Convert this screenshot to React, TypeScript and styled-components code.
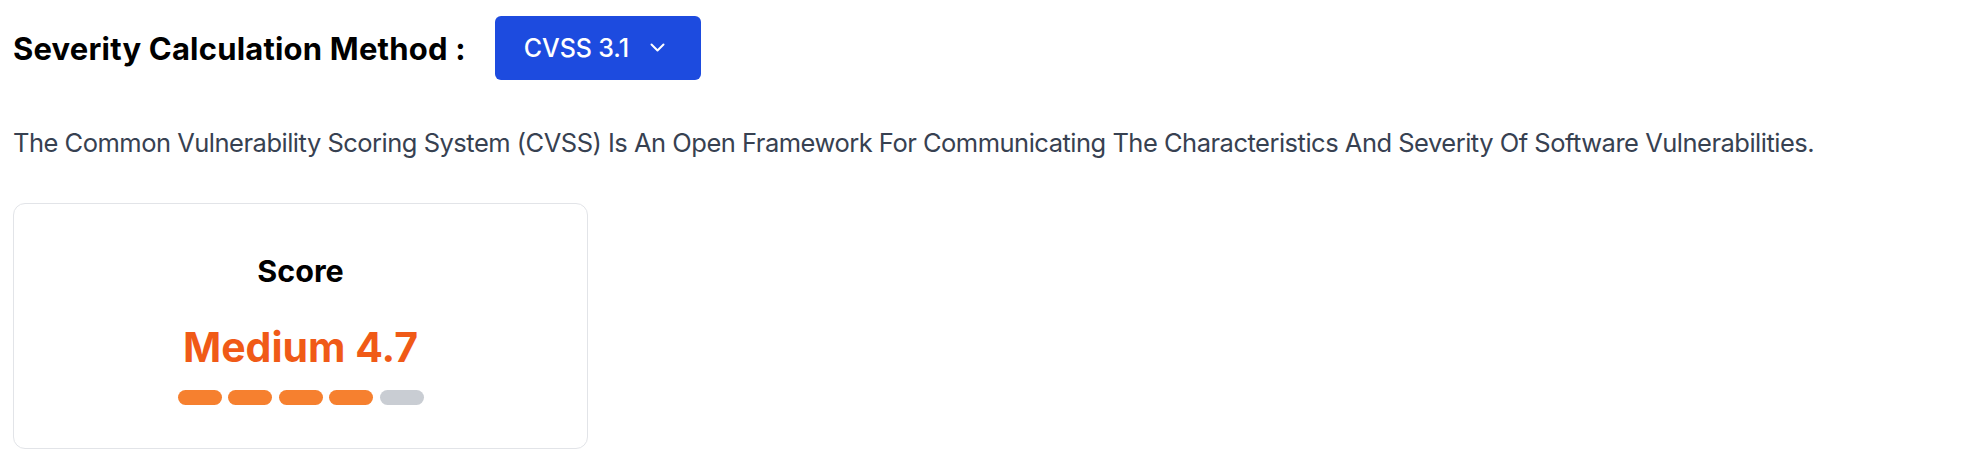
import React from "react";
import styled, { createGlobalStyle } from "styled-components";

const GlobalStyle = createGlobalStyle`
  html, body {
    margin: 0;
    padding: 0;
    background: #ffffff;
  }
  body {
    font-family: Inter, "Noto Sans", "Liberation Sans", sans-serif;
    -webkit-font-smoothing: antialiased;
  }
`;

const Page = styled.div`
  display: flex;
  flex-direction: column;
  align-items: flex-start;
  padding: 16px 13px;
`;

const Header = styled.div`
  display: flex;
  align-items: center;
  gap: 29px;
  height: 64px;
`;

const Title = styled.h2`
  margin: 0;
  padding-top: 2px;
  font-size: 31px;
  font-weight: 700;
  color: #000000;
  letter-spacing: 0.2px;
  line-height: 1.2;
  white-space: nowrap;
`;

const SelectButton = styled.button`
  display: flex;
  align-items: center;
  gap: 21px;
  height: 64px;
  box-sizing: border-box;
  padding: 0 36px 0 29px;
  border: none;
  border-radius: 6px;
  background: #1d4bdf;
  color: #ffffff;
  font-family: inherit;
  font-size: 25px;
  font-weight: 500;
  letter-spacing: -0.1px;
  white-space: nowrap;
  cursor: pointer;
`;

const Description = styled.p`
  margin: 43px 0 0;
  font-size: 25.5px;
  line-height: 39px;
  font-weight: 400;
  letter-spacing: -0.5px;
  color: #374151;
  white-space: nowrap;
`;

const Card = styled.div`
  margin-top: 41px;
  width: 575px;
  box-sizing: border-box;
  border: 1px solid #e2e4e8;
  border-radius: 12px;
  padding: 49px 0 43px;
  display: flex;
  flex-direction: column;
  align-items: center;
`;

const CardLabel = styled.div`
  font-size: 30.5px;
  font-weight: 700;
  line-height: 36px;
  color: #000000;
`;

const ScoreValue = styled.div<{ $color: string }>`
  margin-top: 34px;
  font-size: 41px;
  font-weight: 700;
  line-height: 49px;
  color: ${(p) => p.$color};
`;

const Bars = styled.div`
  margin-top: 18px;
  display: flex;
  gap: 6.5px;
`;

const Bar = styled.span<{ $active: boolean }>`
  display: block;
  width: 44px;
  height: 15px;
  border-radius: 999px;
  background: ${(p) => (p.$active ? "#f6802f" : "#c9cdd3")};
`;

const Chevron = () => (
  <svg width="15" height="10" viewBox="0 0 15 10" fill="none">
    <path
      d="M1.5 1.5L7.5 7.5L13.5 1.5"
      stroke="#ffffff"
      strokeWidth="2"
      strokeLinecap="round"
      strokeLinejoin="round"
    />
  </svg>
);

export default function App() {
  const level = 4;
  return (
    <>
      <GlobalStyle />
      <Page>
        <Header>
          <Title>Severity Calculation Method :</Title>
          <SelectButton>
            <span>CVSS 3.1</span>
            <Chevron />
          </SelectButton>
        </Header>
        <Description>
          The Common Vulnerability Scoring System (CVSS) Is An Open Framework For
          Communicating The Characteristics And Severity Of Software
          Vulnerabilities.
        </Description>
        <Card>
          <CardLabel>Score</CardLabel>
          <ScoreValue $color="#f05a17">Medium 4.7</ScoreValue>
          <Bars>
            {[0, 1, 2, 3, 4].map((i) => (
              <Bar key={i} $active={i < level} />
            ))}
          </Bars>
        </Card>
      </Page>
    </>
  );
}
